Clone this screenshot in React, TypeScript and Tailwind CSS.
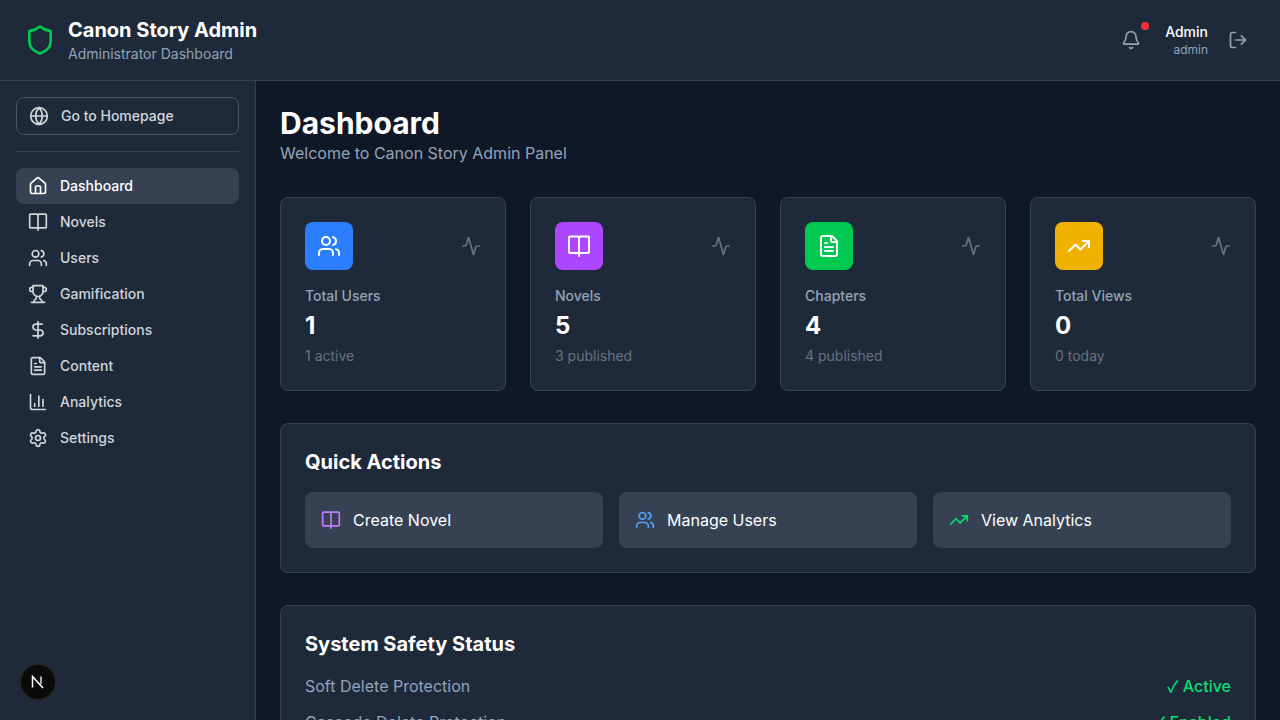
import React from 'react';
import {
  Activity,
  BarChart3,
  Bell,
  DollarSign,
  FileText,
  Globe,
  Home,
  LogOut,
  Settings,
  Shield,
  TrendingUp,
  Users,
} from 'lucide-react';

// older lucide shapes, the installed package draws these two differently
const BookIcon = ({ className }: { className?: string }) => (
  <svg viewBox="0 0 24 24" fill="none" stroke="currentColor" strokeWidth="2" strokeLinecap="round" strokeLinejoin="round" className={className}>
    <path d="M12 4v18" />
    <path d="M3 19a1 1 0 0 1-1-1V3.5a1 1 0 0 1 1-1h8l1 1 1-1h8a1 1 0 0 1 1 1V18a1 1 0 0 1-1 1h-8l-1 1-1-1z" />
  </svg>
);

const TrophyIcon = ({ className }: { className?: string }) => (
  <svg viewBox="0 0 24 24" fill="none" stroke="currentColor" strokeWidth="2" strokeLinecap="round" strokeLinejoin="round" className={className}>
    <path d="M6 9H4.5a2.5 2.5 0 0 1 0-5H6" />
    <path d="M18 9h1.5a2.5 2.5 0 0 0 0-5H18" />
    <path d="M4 22h16" />
    <path d="M10 14.66V17c0 .55-.47.98-.97 1.21C7.85 18.75 7 20.24 7 22" />
    <path d="M14 14.66V17c0 .55.47.98.97 1.21C16.15 18.75 17 20.24 17 22" />
    <path d="M18 2H6v7a6 6 0 0 0 12 0V2Z" />
  </svg>
);

const navItems = [
  { label: 'Dashboard', icon: Home, active: true },
  { label: 'Novels', icon: BookIcon },
  { label: 'Users', icon: Users },
  { label: 'Gamification', icon: TrophyIcon },
  { label: 'Subscriptions', icon: DollarSign },
  { label: 'Content', icon: FileText },
  { label: 'Analytics', icon: BarChart3 },
  { label: 'Settings', icon: Settings },
];

const stats = [
  { label: 'Total Users', value: '1', sub: '1 active', icon: Users, bg: 'bg-blue-500' },
  { label: 'Novels', value: '5', sub: '3 published', icon: BookIcon, bg: 'bg-purple-500' },
  { label: 'Chapters', value: '4', sub: '4 published', icon: FileText, bg: 'bg-green-500' },
  { label: 'Total Views', value: '0', sub: '0 today', icon: TrendingUp, bg: 'bg-yellow-500' },
];

const actions = [
  { label: 'Create Novel', icon: BookIcon, color: 'text-purple-400' },
  { label: 'Manage Users', icon: Users, color: 'text-blue-400' },
  { label: 'View Analytics', icon: TrendingUp, color: 'text-green-400' },
];

const safety = [
  { label: 'Soft Delete Protection', value: 'Active' },
  { label: 'Cascade Delete Protection', value: 'Enabled' },
];

export default function App() {
  return (
    <div className="h-screen flex flex-col overflow-hidden bg-gray-900 font-['Inter',sans-serif]">
      {/* Header */}
      <header className="flex items-center justify-between bg-gray-800 border-b border-gray-700 px-6 py-4 shrink-0">
        <div className="flex items-center gap-3">
          <Shield className="w-8 h-8 text-green-500" />
          <div>
            <h1 className="text-xl font-bold text-white">Canon Story Admin</h1>
            <p className="text-sm text-[#94a3b8]">Administrator Dashboard</p>
          </div>
        </div>
        <div className="flex items-center gap-4">
          <button className="relative p-2 text-gray-400">
            <Bell className="w-5 h-5" />
            <span className="absolute top-0 right-0 w-2 h-2 rounded-full bg-red-500" />
          </button>
          <div className="flex items-center gap-3">
            <div className="text-right">
              <p className="text-sm font-medium text-white">Admin</p>
              <p className="text-xs text-[#94a3b8]">admin</p>
            </div>
            <button className="p-2 text-gray-400">
              <LogOut className="w-5 h-5" />
            </button>
          </div>
        </div>
      </header>

      <div className="flex flex-1 min-h-0">
        {/* Sidebar */}
        <aside className="w-64 shrink-0 bg-gray-800 border-r border-gray-700 p-4">
          <a className="flex items-center gap-3 px-3 py-2 rounded-lg border border-gray-600 text-sm font-medium text-gray-300">
            <Globe className="w-5 h-5" />
            Go to Homepage
          </a>
          <div className="border-t border-gray-700 my-4" />
          <nav>
            {navItems.map(item => (
              <a
                key={item.label}
                className={`flex items-center gap-3 px-3 py-2 rounded-lg text-sm font-medium ${item.active ? 'bg-gray-700 text-white' : 'text-gray-300'}`}
              >
                <item.icon className="w-5 h-5" />
                {item.label}
              </a>
            ))}
          </nav>
        </aside>

        {/* Main */}
        <main className="flex-1 min-w-0 overflow-hidden p-6 bg-gray-900">
          <div className="mb-8">
            <h2 className="text-3xl font-bold text-white">Dashboard</h2>
            <p className="text-[#94a3b8]">Welcome to Canon Story Admin Panel</p>
          </div>

          <div className="grid grid-cols-4 gap-6 mb-8">
            {stats.map(s => (
              <div key={s.label} className="bg-gray-800 border border-gray-700 rounded-lg p-6">
                <div className="flex items-center justify-between mb-4">
                  <div className={`w-12 h-12 rounded-lg flex items-center justify-center text-white ${s.bg}`}>
                    <s.icon className="w-6 h-6" />
                  </div>
                  <Activity className="w-5 h-5 text-gray-500" />
                </div>
                <p className="text-sm font-medium text-[#94a3b8]">{s.label}</p>
                <p className="text-2xl font-bold text-white mt-1">{s.value}</p>
                <p className="text-sm text-gray-500 mt-1">{s.sub}</p>
              </div>
            ))}
          </div>

          <section className="bg-gray-800 border border-gray-700 rounded-lg p-6 mb-8">
            <h3 className="text-xl font-bold text-white mb-4">Quick Actions</h3>
            <div className="grid grid-cols-3 gap-4">
              {actions.map(a => (
                <button key={a.label} className="flex items-center gap-3 p-4 rounded-lg bg-gray-700 text-white">
                  <a.icon className={`w-5 h-5 ${a.color}`} />
                  {a.label}
                </button>
              ))}
            </div>
          </section>

          <section className="bg-gray-800 border border-gray-700 rounded-lg p-6">
            <h3 className="text-xl font-bold text-white mb-4">System Safety Status</h3>
            <div className="flex flex-col gap-3">
              {safety.map(r => (
                <div key={r.label} className="flex items-center justify-between h-6">
                  <span className="text-[#94a3b8]">{r.label}</span>
                  <span className="font-medium text-green-400">
                    <span className="font-['Noto_Sans_CJK_SC',sans-serif] leading-none">✓</span> {r.value}
                  </span>
                </div>
              ))}
            </div>
          </section>
        </main>
      </div>

      {/* Next.js dev badge */}
      <div className="fixed left-[19px] bottom-[19px] w-[38px] h-[38px] rounded-full bg-[#0a0a0a] border-2 border-[#262626] flex items-center justify-center">
        <svg width="14" height="14" viewBox="0 0 14 14" fill="none">
          <path d="M1.5 12.5V1.5L12 13" stroke="white" strokeWidth="1.5" />
          <path d="M10 1.5V9" stroke="white" strokeWidth="1.3" />
        </svg>
      </div>
    </div>
  );
}
